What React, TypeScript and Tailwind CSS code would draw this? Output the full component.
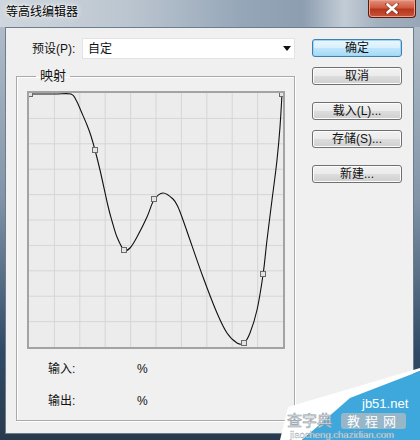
import React from 'react';

type Pt = [number, number];

// curve points, page coordinates (svg viewBox is offset to match)
const curve: Pt[] = [
  [30, 94], [55, 94], [71, 94], [76, 100], [81, 111], [87, 125], [91, 136], [95, 150], [100, 170],
  [108, 206], [112, 221], [117, 237], [124, 250], [130, 248], [137, 237], [147, 217],
  [154, 200], [163, 193], [173, 199], [178, 207], [183, 220], [190, 240], [203, 277],
  [217, 313], [227, 333], [237, 343], [244, 343], [250, 333], [257, 310], [263, 275],
  [267, 240], [272, 200], [277, 160], [280, 127], [282, 94],
];

const markers: Pt[] = [
  [30, 94], [95, 150], [124, 250], [154, 199], [244, 343], [263, 274], [282, 94],
];

const smoothPath = (pts: Pt[]) => {
  let d = `M${pts[0][0]},${pts[0][1]}`;
  for (let i = 0; i < pts.length - 1; i++) {
    const p0 = pts[i - 1] || pts[i];
    const p1 = pts[i];
    const p2 = pts[i + 1];
    const p3 = pts[i + 2] || p2;
    const c1x = p1[0] + (p2[0] - p0[0]) / 6;
    const c1y = p1[1] + (p2[1] - p0[1]) / 6;
    const c2x = p2[0] - (p3[0] - p1[0]) / 6;
    const c2y = p2[1] - (p3[1] - p1[1]) / 6;
    d += ` C${c1x.toFixed(1)},${c1y.toFixed(1)} ${c2x.toFixed(1)},${c2y.toFixed(1)} ${p2[0]},${p2[1]}`;
  }
  return d;
};

const WinButton: React.FC<{ label: string; primary?: boolean; className?: string }> = ({
  label,
  primary,
  className,
}) => (
  <button
    className={
      'w-[90px] h-[18px] rounded-[3px] border flex items-center justify-center text-[12px] leading-none text-[#111] ' +
      (primary
        ? 'border-[#3c7fb1] bg-[linear-gradient(#eaf6fd_0%,#d9f0fc_50%,#bee6fd_51%,#a7d9f5_100%)] shadow-[inset_0_0_0_1px_#9fd6f3] '
        : 'border-[#707070] bg-[linear-gradient(#f2f2f2_0%,#ebebeb_50%,#dddddd_51%,#cfcfcf_100%)] shadow-[inset_0_0_0_1px_#fcfcfc] ') +
      (className || '')
    }
  >
    {label}
  </button>
);

export default function App() {
  const gridX = Array.from({ length: 9 }, (_, i) => 29 + 25.4 * (i + 1));
  const gridY = Array.from({ length: 9 }, (_, i) => 93 + 25.4 * (i + 1));

  return (
    <div className="w-[420px] h-[440px] relative overflow-hidden flex flex-col bg-[linear-gradient(180deg,#b7c2cd_0%,#8194a8_45%,#2f4a66_80%,#2a3a4c_100%)] font-['Liberation_Sans','Noto_Sans_CJK_SC',sans-serif]">
      {/* Title bar */}
      <div className="h-[27px] flex items-start bg-[linear-gradient(90deg,#cfd6dd_0%,#bcc6d0_30%,#95a6b8_58%,#8d9eb1_72%,#c2ccd6_82%,#a3b0be_90%,#98a7b7_100%)]">
        <div className="pl-[6px] pt-[3px] text-[12px] leading-[18px] text-black [text-shadow:0_0_6px_#fff,0_0_3px_#fff]">
          等高线编辑器
        </div>
        <div className="ml-auto mr-[4px] w-[48px] h-[18px] rounded-b-[4px] border border-t-0 border-[#5a1a10] bg-[linear-gradient(#e3927f_0%,#cf5a3f_45%,#b5361d_55%,#c8553a_100%)] shadow-[inset_0_0_0_1px_#e9a08e] flex items-center justify-center">
          <svg width="14" height="11" viewBox="0 0 14 11">
            <path d="M2 1 L12 10 M12 1 L2 10" stroke="#5a2010" strokeWidth="4" strokeLinecap="round" opacity="0.5" />
            <path d="M2.5 1.5 L11.5 9.5 M11.5 1.5 L2.5 9.5" stroke="#fff" strokeWidth="2.6" strokeLinecap="round" />
          </svg>
        </div>
      </div>

      {/* Client area */}
      <div className="flex-1 ml-[5px] mr-[6px] mb-[6px] border border-[#6d7d8e] bg-[#f0f0f0] flex pl-[10px] pt-[10px] text-[12px] text-[#111]">
        {/* Left column */}
        <div className="w-[279px] flex flex-col">
          <div className="h-[21px] flex items-center pl-[16px]">
            <span className="w-[50px] shrink-0">预设(P):</span>
            <div className="flex-1 h-[21px] bg-white border border-[#e3e3e3] flex items-center pl-[5px] pr-[3px]">
              <span>自定</span>
              <svg className="ml-auto" width="8" height="5" viewBox="0 0 8 5">
                <path d="M0 0 H8 L4 5 Z" fill="#111" />
              </svg>
            </div>
          </div>

          <fieldset className="mt-[9px] h-[353px] border border-[#a9a9a9] shadow-[inset_1px_1px_0_#fff,1px_1px_0_#fff] flex flex-col">
            <legend className="ml-[19px] px-[4px] leading-[16px] text-[13px]">映射</legend>
            <div className="mt-[7px] ml-[10px] w-[258px] h-[258px] border-2 border-[#a3a3a3] bg-[#ececec]">
              <svg width="254" height="254" viewBox="29 93 254 254" className="block">
                {gridX.map((x) => (
                  <line key={'x' + x} x1={x} y1={93} x2={x} y2={347} stroke="#d6d6d6" strokeWidth="1" />
                ))}
                {gridY.map((y) => (
                  <line key={'y' + y} x1={29} y1={y} x2={283} y2={y} stroke="#d6d6d6" strokeWidth="1" />
                ))}
                <path d={smoothPath(curve)} fill="none" stroke="#111" strokeWidth="1.1" />
                {markers.map(([x, y]) => (
                  <rect
                    key={x + '-' + y}
                    x={x - 2.5}
                    y={y - 2.5}
                    width="5"
                    height="5"
                    fill="#e4e4e4"
                    stroke="#6a6a6a"
                    strokeWidth="1"
                  />
                ))}
              </svg>
            </div>
            <div className="mt-[12px] h-[16px] flex items-center pl-[31px]">
              <span className="w-[89px]">输入:</span>
              <span>%</span>
            </div>
            <div className="mt-[16px] h-[16px] flex items-center pl-[31px]">
              <span className="w-[89px]">输出:</span>
              <span>%</span>
            </div>
          </fieldset>
        </div>

        {/* Right column */}
        <div className="ml-[17px] flex flex-col pt-[1px]">
          <WinButton label="确定" primary />
          <WinButton label="取消" className="mt-[10px]" />
          <WinButton label="载入(L)..." className="mt-[17px]" />
          <WinButton label="存储(S)..." className="mt-[10px]" />
          <WinButton label="新建..." className="mt-[17px]" />
        </div>
      </div>

      {/* watermark overlay */}
      <svg className="absolute right-0 bottom-0" width="140" height="72" viewBox="280 368 140 72">
        <polygon points="280,440 288,407 420,368 420,371 350,398 302,440" fill="#ffffff" />
        <polygon points="420,371 350,398 302,440 420,440" fill="#3ea8dd" />
        <text x="362" y="408" fontSize="13" fill="#ffffff" fontFamily="Liberation Sans, sans-serif">jb51.net</text>
        <rect x="341" y="413" width="65" height="16" rx="3" fill="#a7b8c3" opacity="0.85" />
        <text x="347" y="426" fontSize="13" fill="#ffffff" fontFamily="Noto Sans CJK SC, sans-serif" letterSpacing="5">教程网</text>
        <text x="287" y="426" fontSize="15" fill="#ffffff" stroke="#8e9aa4" strokeWidth="0.6" fontFamily="Noto Sans CJK SC, sans-serif">查字典</text>
        <text x="290" y="438" fontSize="9.5" fill="#ffffff" stroke="#8e9aa4" strokeWidth="0.3" fontFamily="Liberation Sans, sans-serif">jiaocheng.chazidian.com</text>
      </svg>
    </div>
  );
}
